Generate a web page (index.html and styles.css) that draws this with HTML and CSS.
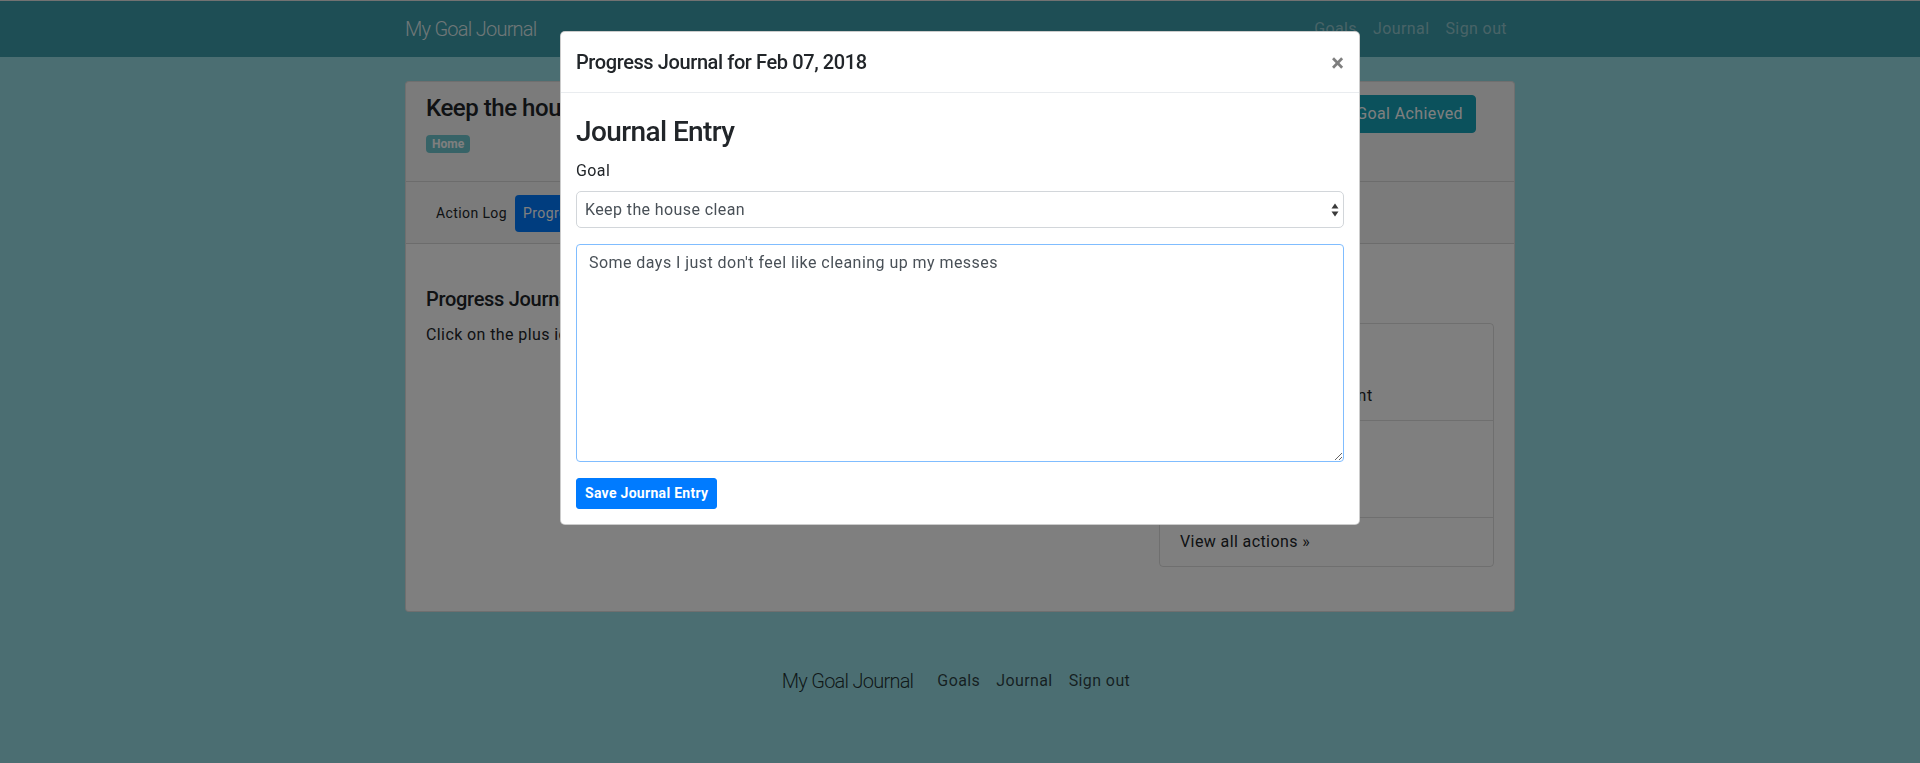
FILE: index.html
```html
<!DOCTYPE html>
<html lang="en">
<head>
<meta charset="utf-8">
<title>My Goal Journal</title>
<link rel="stylesheet" href="styles.css">
</head>
<body>
<nav class="topbar">
  <div class="container topbar-inner">
    <a class="brand" href="#">My Goal Journal</a>
    <ul class="topnav">
      <li><a href="#">Goals</a></li>
      <li><a href="#">Journal</a></li>
      <li><a href="#">Sign out</a></li>
    </ul>
  </div>
</nav>

<main class="container page">
  <div class="card">
    <div class="card-header goal-header">
      <div class="goal-info">
        <h4 class="goal-title">Keep the house clean</h4>
        <p class="goal-tags"><span class="badge">Home</span></p>
      </div>
      <button class="btn btn-info">Goal Achieved</button>
    </div>
    <div class="card-header tabs">
      <ul class="pills">
        <li><a class="pill" href="#">Action Log</a></li>
        <li><a class="pill active" href="#">Progress Journal</a></li>
      </ul>
    </div>
    <div class="card-body">
      <section class="journal-col">
        <h5 class="section-title">Progress Journal</h5>
        <p class="hint">Click on the plus icon next to a day to add a journal entry.</p>
      </section>
      <aside class="actions-col">
        <h5 class="section-title">Recent Actions</h5>
        <ul class="list-group">
          <li class="list-item">
            <div class="item-title">Tidy up</div>
            <div class="item-date">Feb 06, 2018</div>
            <div class="item-text">Vacuumed the apartment</div>
          </li>
          <li class="list-item">
            <div class="item-title">Dishes</div>
            <div class="item-date">Feb 05, 2018</div>
            <div class="item-text">Washed the dishes</div>
          </li>
          <li class="list-item"><a class="view-all" href="#">View all actions &raquo;</a></li>
        </ul>
      </aside>
    </div>
  </div>
</main>

<footer class="footer">
  <a class="brand footer-brand" href="#">My Goal Journal</a>
  <ul class="footnav">
    <li><a href="#">Goals</a></li>
    <li><a href="#">Journal</a></li>
    <li><a href="#">Sign out</a></li>
  </ul>
</footer>

<div class="backdrop"></div>

<div class="modal">
  <div class="modal-dialog">
    <div class="modal-content">
      <div class="modal-header">
        <h5 class="modal-title">Progress Journal for Feb 07, 2018</h5>
        <button class="close" type="button" aria-label="Close">&times;</button>
      </div>
      <div class="modal-body">
        <h3 class="entry-title">Journal Entry</h3>
        <div class="form-group">
          <label class="label" for="goal">Goal</label>
          <div class="select-wrap">
            <select id="goal" class="select">
              <option>Keep the house clean</option>
            </select>
            <svg class="select-arrows" width="8" height="14" viewBox="0 0 8 14" aria-hidden="true">
              <path d="M4 0.5 L7.5 5.5 L0.5 5.5 Z" fill="#3a3a3a"/>
              <path d="M0.5 8.5 L7.5 8.5 L4 13.5 Z" fill="#3a3a3a"/>
            </svg>
          </div>
        </div>
        <div class="form-group">
          <textarea class="textarea">Some days I just don't feel like cleaning up my messes</textarea>
        </div>
        <button class="btn btn-primary btn-sm" type="button">Save Journal Entry</button>
      </div>
    </div>
  </div>
</div>
</body>
</html>
```

FILE: styles.css
```css
* { box-sizing: border-box; }

html, body {
  height: 100%;
}

body {
  margin: 0;
  font-family: Roboto, "Liberation Sans", Arial, sans-serif;
  font-size: 16px;
  line-height: 1.5;
  letter-spacing: 0.4px;
  color: #212529;
  background: #96dce4;
  overflow: hidden;
}

a { text-decoration: none; }

.container {
  width: 1110px;
  margin: 0 auto;
}

/* top navbar */
.topbar {
  background: #3c9caa;
  border-top: 1px solid #e4e4e4;
}

.topbar-inner {
  display: flex;
  align-items: center;
  justify-content: space-between;
  height: 56px;
}

.brand {
  display: block;
  font-size: 20px;
  font-weight: 300;
  letter-spacing: -0.75px;
  line-height: 30px;
  padding: 5px 0;
  color: rgba(255, 255, 255, 0.85);
}

.topnav, .footnav {
  display: flex;
  list-style: none;
  margin: 0;
  padding: 0;
}

.topnav a, .footnav a {
  display: block;
  padding: 8px;
  line-height: 24px;
  font-size: 16px;
}

.topnav a { color: rgba(255, 255, 255, 0.45); }

/* card */
.page { margin-top: 24px; }

.card {
  background: #fff;
  border: 1px solid rgba(0, 0, 0, 0.125);
  border-radius: 4px;
}

.card-header {
  background: rgba(0, 0, 0, 0.03);
  border-bottom: 1px solid rgba(0, 0, 0, 0.125);
}

.goal-header {
  display: flex;
  justify-content: space-between;
  align-items: flex-start;
  padding: 12px 20px 12px 20px;
}

.goal-title {
  margin: 0 0 8px;
  font-size: 24px;
  font-weight: 500;
  line-height: 1.2;
  letter-spacing: -0.45px;
}

.goal-tags {
  margin: 0 0 14px;
  line-height: 24px;
}

.badge {
  display: inline-block;
  padding: 3px 6px;
  font-size: 12px;
  font-weight: 700;
  line-height: 1;
  letter-spacing: 0;
  color: #fff;
  background: #6fc7ce;
  border-radius: 4px;
}

.btn {
  display: inline-block;
  font-family: inherit;
  letter-spacing: inherit;
  border: 1px solid transparent;
  cursor: pointer;
}

.btn-info {
  margin: 1px 18px 0 0;
  padding: 6px 12px;
  font-size: 16px;
  line-height: 24px;
  color: #fff;
  background: #17a2b8;
  border-color: #17a2b8;
  border-radius: 4px;
}

.tabs {
  padding: 13px 20px 11px 22px;
}

.pills {
  display: flex;
  list-style: none;
  margin: 0;
  padding: 0;
}

.pill {
  display: block;
  padding: 8px;
  font-size: 14px;
  line-height: 21px;
  color: #212529;
  border-radius: 4px;
}

.pill.active {
  color: #fff;
  background: #007bff;
}

.card-body {
  display: grid;
  grid-template-columns: 1fr 335px;
  column-gap: 30px;
  padding: 43px 20px 20px;
}

.section-title {
  margin: 0 0 12px;
  font-size: 20px;
  font-weight: 500;
  line-height: 1.2;
  letter-spacing: -0.3px;
}

.hint { margin: 0 0 16px; }

.list-group {
  list-style: none;
  margin: 0 0 24px;
  padding: 0;
  border: 1px solid rgba(0, 0, 0, 0.125);
  border-radius: 4px;
}

.list-item {
  padding: 12px 20px;
  border-bottom: 1px solid rgba(0, 0, 0, 0.125);
}

.list-item:last-child { border-bottom: 0; }

.item-title {
  font-weight: 500;
  line-height: 24px;
}

.item-date {
  font-size: 14px;
  line-height: 21px;
  margin-bottom: 3px;
  color: #6c757d;
}

.item-text {
  line-height: 24px;
  letter-spacing: 0.55px;
}

.view-all { color: #212529; }

/* footer */
.footer {
  display: flex;
  justify-content: center;
  align-items: center;
  margin-top: 41px;
  padding: 8px 0;
}

.footer-brand {
  margin-right: 16px;
  color: rgba(0, 0, 0, 0.8);
}

.footnav a { color: rgba(0, 0, 0, 0.72); }

/* modal */
.backdrop {
  position: fixed;
  inset: 0;
  background: rgba(0, 0, 0, 0.5);
  z-index: 1040;
}

.modal {
  position: fixed;
  inset: 0;
  z-index: 1050;
  overflow: hidden;
}

.modal-dialog {
  width: 800px;
  margin: 31px auto 0;
}

.modal-content {
  background: #fff;
  border: 1px solid rgba(0, 0, 0, 0.2);
  border-radius: 5px;
}

.modal-header {
  display: flex;
  align-items: flex-start;
  justify-content: space-between;
  padding: 15px;
  border-bottom: 1px solid #e9ecef;
}

.modal-title {
  margin: 0;
  font-size: 20px;
  font-weight: 500;
  line-height: 30px;
  letter-spacing: -0.4px;
}

.close {
  margin: -15px -15px -15px auto;
  padding: 19px 15px 15px;
  background: transparent;
  border: 0;
  font-family: inherit;
  font-size: 24px;
  font-weight: 700;
  line-height: 1;
  letter-spacing: 0;
  color: #000;
  opacity: 0.5;
}

.modal-body {
  padding: 15px;
}

.entry-title {
  margin: 7px 0 10px;
  font-size: 28px;
  font-weight: 500;
  line-height: 1.2;
  letter-spacing: -0.6px;
}

.form-group { margin-bottom: 16px; }

.label {
  display: block;
  margin-bottom: 8px;
  line-height: 24px;
}

.select-wrap { position: relative; }

.select {
  display: block;
  width: 100%;
  height: 37px;
  padding: 0 28px 0 8px;
  font-family: inherit;
  font-size: 16px;
  letter-spacing: inherit;
  color: #495057;
  background: #fff;
  border: 1px solid #d2d6da;
  border-radius: 5px;
  appearance: none;
  -webkit-appearance: none;
}

.select-arrows {
  position: absolute;
  right: 5px;
  top: 12px;
}

.textarea {
  display: block;
  width: 100%;
  height: 218px;
  padding: 6px 12px;
  font-family: inherit;
  font-size: 16px;
  line-height: 24px;
  letter-spacing: 0.45px;
  color: #495057;
  background: #fff;
  border: 1px solid #80bdff;
  border-radius: 4px;
  outline: none;
}

.btn-primary {
  color: #fff;
  background: #007bff;
  border-color: #007bff;
}

.btn-sm {
  padding: 4px 8px;
  font-size: 14px;
  font-weight: 700;
  line-height: 21px;
  letter-spacing: 0.3px;
  border-radius: 3px;
}
```
